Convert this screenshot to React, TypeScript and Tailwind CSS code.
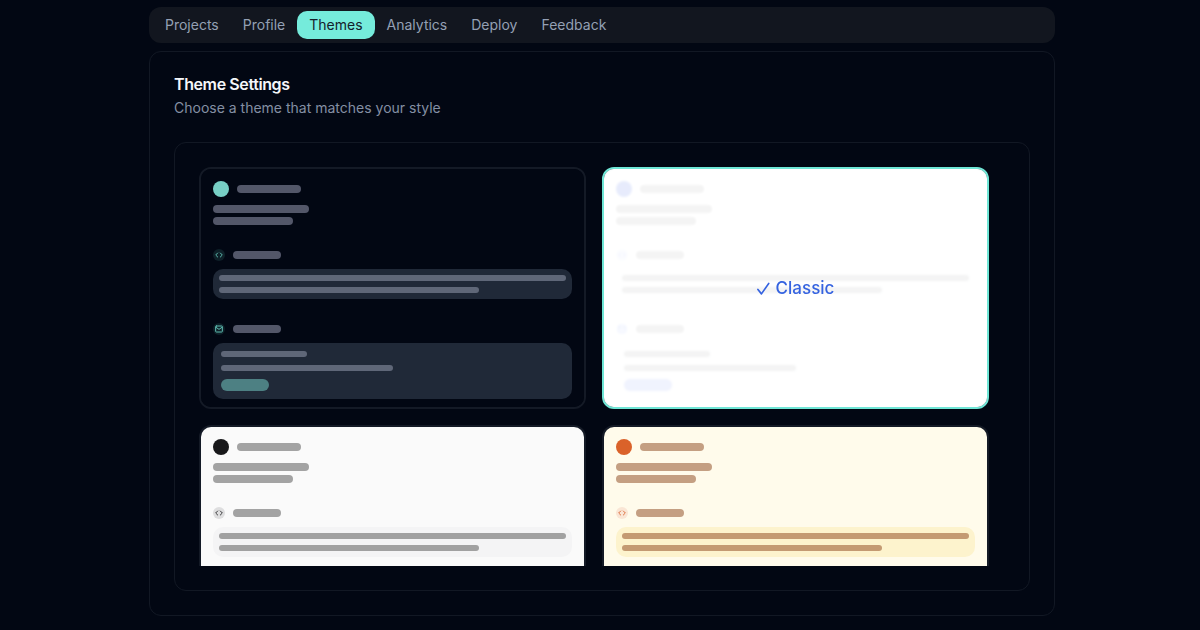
import { useState } from "react";

type Theme = {
  id: string;
  name: string;
  page: string;
  avatar: string;
  line: string;
  badge: string;
  box: string;
  boxLine: string;
  button: string;
};

const tabs = ["Projects", "Profile", "Themes", "Analytics", "Deploy", "Feedback"];

const themes: Theme[] = [
  {
    id: "midnight",
    name: "Midnight",
    page: "bg-[#020713]",
    avatar: "bg-[#77cfc5]",
    line: "bg-[#535769]",
    badge: "bg-[#0e2028] text-[#5fbdb2]",
    box: "bg-[#202938]",
    boxLine: "bg-[#5f6778]",
    button: "bg-[#4d8083]",
  },
  {
    id: "classic",
    name: "Classic",
    page: "bg-white",
    avatar: "bg-[#3b5fe3]",
    line: "bg-[#a0a0a0]",
    badge: "bg-[#dfe6fc] text-[#6b8cf0]",
    box: "bg-[#f9fafb]",
    boxLine: "bg-[#a0a0a0]",
    button: "bg-[#8199f3]",
  },
  {
    id: "mono",
    name: "Mono",
    page: "bg-[#fafafa]",
    avatar: "bg-[#18181a]",
    line: "bg-[#a3a3a3]",
    badge: "bg-[#dededf] text-[#3b3b3d]",
    box: "bg-[#f4f4f5]",
    boxLine: "bg-[#a1a1a1]",
    button: "bg-[#5f5f61]",
  },
  {
    id: "amber",
    name: "Amber",
    page: "bg-[#fffbeb]",
    avatar: "bg-[#da622a]",
    line: "bg-[#c49f82]",
    badge: "bg-[#fae6d5] text-[#de7343]",
    box: "bg-[#fdf3cd]",
    boxLine: "bg-[#c49a72]",
    button: "bg-[#e5a077]",
  },
];

function CodeIcon() {
  return (
    <svg viewBox="0 0 24 24" className="size-2" fill="none" stroke="currentColor" strokeWidth="3" strokeLinecap="round" strokeLinejoin="round">
      <path d="M16 18l6-6-6-6M8 6l-6 6 6 6" />
    </svg>
  );
}

function MailIcon() {
  return (
    <svg viewBox="0 0 24 24" className="size-2" fill="none" stroke="currentColor" strokeWidth="3" strokeLinecap="round" strokeLinejoin="round">
      <rect x="2" y="3" width="20" height="18" rx="2" />
      <path d="M3 7l9 6 9-6" />
    </svg>
  );
}

function ThemePreview({ theme }: { theme: Theme }) {
  return (
    <div className={`flex flex-col px-3 pt-3 pb-2 ${theme.page}`}>
      <div className="flex items-center gap-2">
        <div className={`size-4 rounded-full ${theme.avatar}`} />
        <div className={`h-2 w-16 rounded-full ${theme.line}`} />
      </div>
      <div className="mt-2 flex flex-col gap-1">
        <div className={`h-2 w-24 rounded-full ${theme.line}`} />
        <div className={`h-2 w-20 rounded-full ${theme.line}`} />
      </div>

      <div className="mt-6 flex items-center gap-2">
        <div className={`flex size-3 items-center justify-center rounded-full ${theme.badge}`}>
          <CodeIcon />
        </div>
        <div className={`h-2 w-12 rounded-full ${theme.line}`} />
      </div>
      <div className={`mt-2 flex flex-col gap-1.5 rounded-[10px] p-1.5 ${theme.box}`}>
        <div className={`h-1.5 w-full rounded-full ${theme.boxLine}`} />
        <div className={`h-1.5 w-3/4 rounded-full ${theme.boxLine}`} />
      </div>

      <div className="mt-6 flex items-center gap-2">
        <div className={`flex size-3 items-center justify-center rounded-full ${theme.badge}`}>
          <MailIcon />
        </div>
        <div className={`h-2 w-12 rounded-full ${theme.line}`} />
      </div>
      <div className={`mt-2 flex flex-col gap-2 rounded-[10px] p-2 ${theme.box}`}>
        <div className={`h-1.5 w-1/4 rounded-full ${theme.boxLine}`} />
        <div className={`h-1.5 w-1/2 rounded-full ${theme.boxLine}`} />
        <div className={`h-3 w-12 rounded-full ${theme.button}`} />
      </div>
    </div>
  );
}

type ThemeCardProps = {
  theme: Theme;
  selected: boolean;
  onSelect: () => void;
};

function ThemeCard({ theme, selected, onSelect }: ThemeCardProps) {
  return (
    <button
      type="button"
      aria-label={theme.name}
      aria-pressed={selected}
      onClick={onSelect}
      className={`relative block w-full cursor-pointer overflow-hidden rounded-xl border-2 text-left ${
        selected ? "border-[#6fe6d6]" : "border-[#141a26]"
      }`}
    >
      <ThemePreview theme={theme} />
      {selected && (
        <div className="absolute inset-0 flex items-center justify-center gap-1.5 bg-white/88 text-[17px] leading-7 font-medium text-[#3563e0] backdrop-blur-[1px]">
          <svg viewBox="0 0 14 14" className="size-[13px]" fill="none" stroke="currentColor" strokeWidth="1.8" strokeLinecap="round" strokeLinejoin="round">
            <path d="M1 8l3.8 4.8L12.6 1.6" />
          </svg>
          <span>{theme.name}</span>
        </div>
      )}
    </button>
  );
}

export default function App() {
  const [activeTab, setActiveTab] = useState("Themes");
  const [selected, setSelected] = useState("classic");

  return (
    <div className="min-h-screen bg-[#020713] pt-[7px] pb-3.5 pl-1 font-[Inter,'Liberation_Sans',sans-serif]">
      <div className="mx-auto flex max-w-[906px] flex-col gap-2">
        <nav className="flex rounded-xl bg-[#12161f] p-1">
          {tabs.map((tab) => (
            <button
              key={tab}
              type="button"
              onClick={() => setActiveTab(tab)}
              className={`cursor-pointer rounded-[10px] px-3 py-1 text-sm ${
                activeTab === tab ? "bg-[#75ebdb] text-[#14202b]" : "text-[#94a0b4]"
              }`}
            >
              {tab}
            </button>
          ))}
        </nav>

        <main className="rounded-xl border border-[#121824] p-6">
          <h1 className="text-base leading-none font-semibold tracking-tight text-[#f5f7fa]">Theme Settings</h1>
          <p className="mt-1.5 text-sm text-[#848fa3]">Choose a theme that matches your style</p>

          <section className="mt-6 rounded-xl border border-[#121824] py-6 pr-10 pl-6">
            <div className="h-[399px] overflow-hidden">
              <div className="grid grid-cols-2 gap-4">
                {themes.map((theme) => (
                  <ThemeCard
                    key={theme.id}
                    theme={theme}
                    selected={selected === theme.id}
                    onSelect={() => setSelected(theme.id)}
                  />
                ))}
              </div>
            </div>
          </section>
        </main>
      </div>
    </div>
  );
}
